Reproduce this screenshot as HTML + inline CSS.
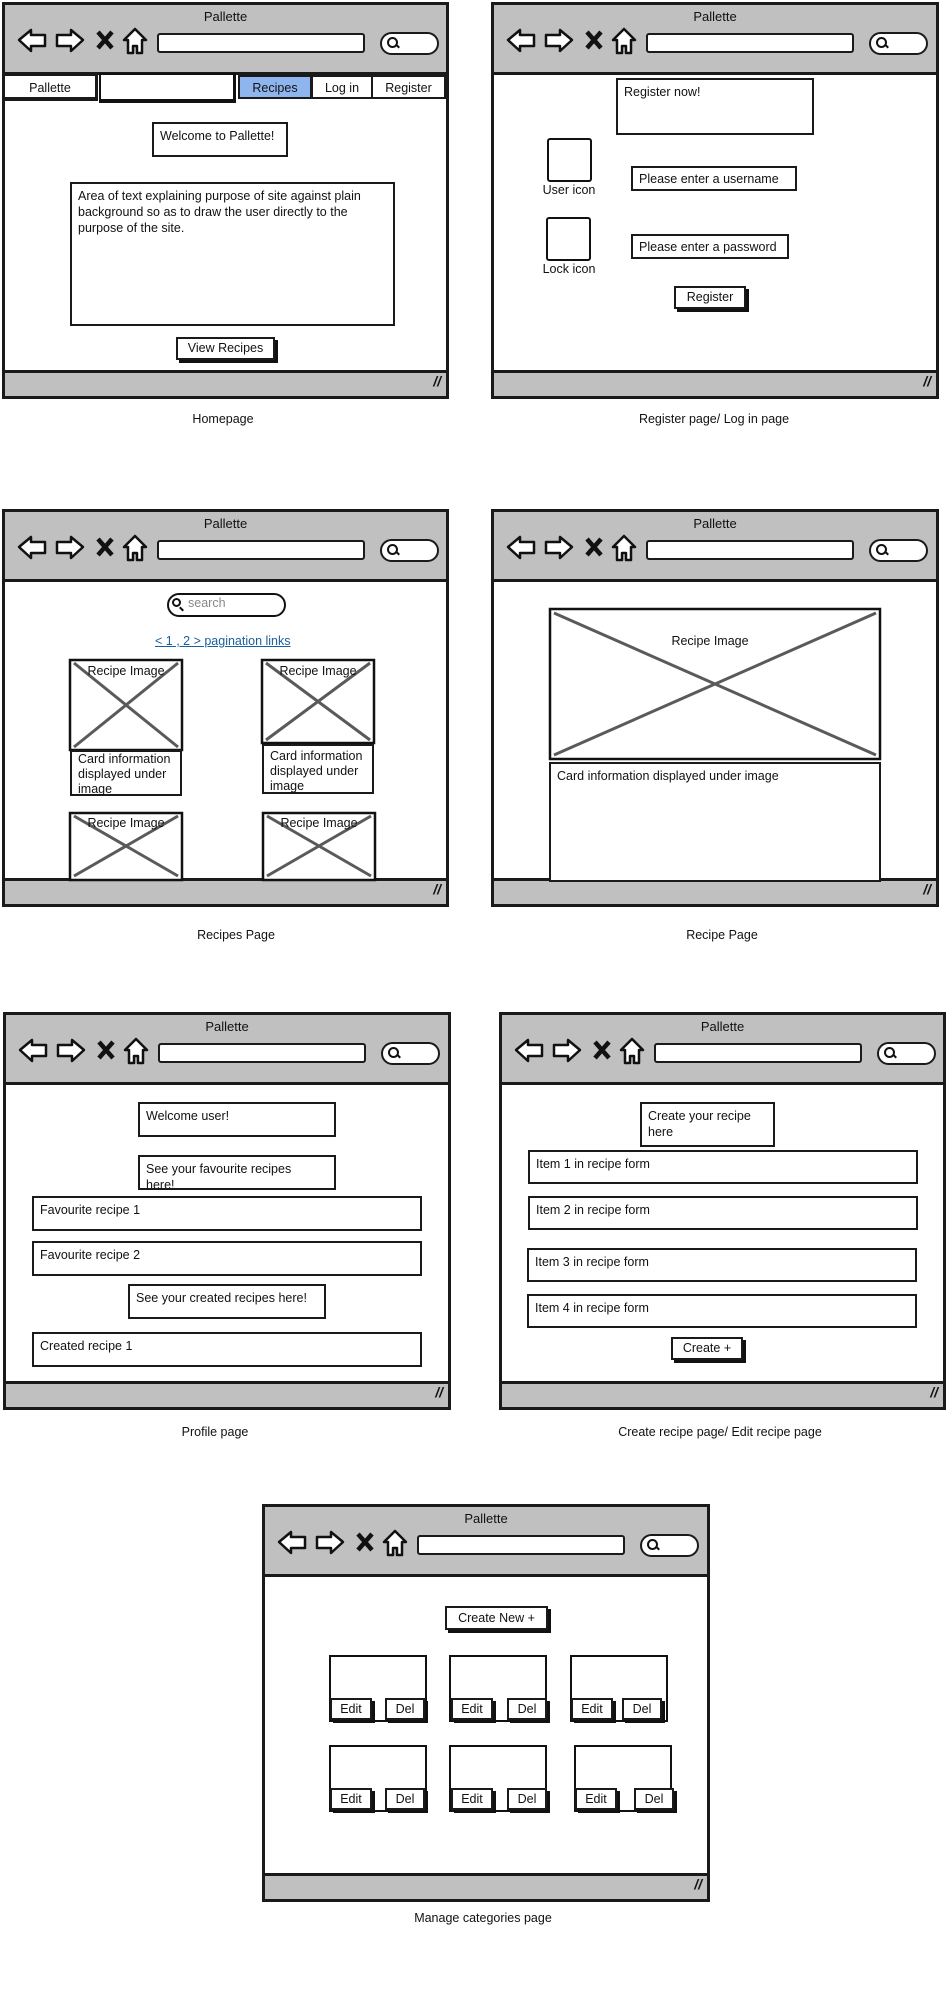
<!DOCTYPE html>
<html><head><meta charset="utf-8"><style>
body{margin:0;width:947px;height:1990px;position:relative;background:#fff;font-family:"Liberation Sans",sans-serif;color:#111;overflow:hidden}
.a{position:absolute;box-sizing:border-box}
.fr{border:3px solid #1a1a1a;background:#fff}
.tb{position:absolute;left:0;right:0;top:0;height:70px;background:#c0c0c0;border-bottom:3px solid #1a1a1a;box-sizing:border-box}
.tt{position:absolute;left:0;right:0;top:4px;text-align:center;font-size:13px}
.ico{position:absolute;left:11px;top:21px}
.addr{position:absolute;left:152px;top:28px;width:208px;height:20px;background:#fff;border:2px solid #1a1a1a;border-radius:3px;box-sizing:border-box}
.srch{position:absolute;left:375px;top:27px;width:59px;height:23px;background:#fff;border:2px solid #1a1a1a;border-radius:12px;box-sizing:border-box}
.srch:before{content:"";position:absolute;left:5px;top:3px;width:7px;height:7px;border:2px solid #111;border-radius:50%}
.srch:after{content:"";position:absolute;left:13px;top:11px;width:5px;height:2px;background:#111;transform:rotate(45deg)}
.ft{position:absolute;left:0;right:0;bottom:0;height:26px;background:#c0c0c0;border-top:3px solid #1a1a1a;box-sizing:border-box}
.ft:after{content:"//";position:absolute;right:5px;top:0;font-size:14px;font-weight:bold;font-style:italic}
.bx{border:2px solid #1a1a1a;background:#fff;font-size:12.5px;padding:4px 6px;line-height:16px}
.bt{border:2px solid #1a1a1a;background:#fff;font-size:12.5px;text-align:center;box-shadow:3px 3px 0 #111}
.cap{font-size:12.5px;text-align:center;width:300px}
</style></head><body>

<div class="a fr" style="left:2px;top:2px;width:447px;height:397px"><div class="tb"><div class="tt">Pallette</div>
<svg class="ico" width="132" height="30" viewBox="0 0 132 30"><g fill="#fff" stroke="#111" stroke-width="2.5" stroke-linejoin="round"><path d="M3 14 L15 4 L15 9 L29 9 L29 20 L15 20 L15 25 Z"/><path d="M67 14 L55 4 L55 9 L41 9 L41 20 L55 20 L55 25 Z"/><path d="M119 3 L130 14 L126 14 L126 27 L121 27 L121 20 L117 20 L117 27 L112 27 L112 14 L108 14 Z"/></g><path d="M82 6 L96 22 M96 6 L82 22" stroke="#111" stroke-width="4.5"/></svg>
<div class="addr"></div><div class="srch"></div></div><div class="ft"></div></div>

<div class="a fr" style="left:491px;top:2px;width:448px;height:397px"><div class="tb"><div class="tt">Pallette</div>
<svg class="ico" width="132" height="30" viewBox="0 0 132 30"><g fill="#fff" stroke="#111" stroke-width="2.5" stroke-linejoin="round"><path d="M3 14 L15 4 L15 9 L29 9 L29 20 L15 20 L15 25 Z"/><path d="M67 14 L55 4 L55 9 L41 9 L41 20 L55 20 L55 25 Z"/><path d="M119 3 L130 14 L126 14 L126 27 L121 27 L121 20 L117 20 L117 27 L112 27 L112 14 L108 14 Z"/></g><path d="M82 6 L96 22 M96 6 L82 22" stroke="#111" stroke-width="4.5"/></svg>
<div class="addr"></div><div class="srch"></div></div><div class="ft"></div></div>

<div class="a fr" style="left:2px;top:509px;width:447px;height:398px"><div class="tb"><div class="tt">Pallette</div>
<svg class="ico" width="132" height="30" viewBox="0 0 132 30"><g fill="#fff" stroke="#111" stroke-width="2.5" stroke-linejoin="round"><path d="M3 14 L15 4 L15 9 L29 9 L29 20 L15 20 L15 25 Z"/><path d="M67 14 L55 4 L55 9 L41 9 L41 20 L55 20 L55 25 Z"/><path d="M119 3 L130 14 L126 14 L126 27 L121 27 L121 20 L117 20 L117 27 L112 27 L112 14 L108 14 Z"/></g><path d="M82 6 L96 22 M96 6 L82 22" stroke="#111" stroke-width="4.5"/></svg>
<div class="addr"></div><div class="srch"></div></div><div class="ft"></div></div>

<div class="a fr" style="left:491px;top:509px;width:448px;height:398px"><div class="tb"><div class="tt">Pallette</div>
<svg class="ico" width="132" height="30" viewBox="0 0 132 30"><g fill="#fff" stroke="#111" stroke-width="2.5" stroke-linejoin="round"><path d="M3 14 L15 4 L15 9 L29 9 L29 20 L15 20 L15 25 Z"/><path d="M67 14 L55 4 L55 9 L41 9 L41 20 L55 20 L55 25 Z"/><path d="M119 3 L130 14 L126 14 L126 27 L121 27 L121 20 L117 20 L117 27 L112 27 L112 14 L108 14 Z"/></g><path d="M82 6 L96 22 M96 6 L82 22" stroke="#111" stroke-width="4.5"/></svg>
<div class="addr"></div><div class="srch"></div></div><div class="ft"></div></div>

<div class="a fr" style="left:3px;top:1012px;width:448px;height:398px"><div class="tb"><div class="tt">Pallette</div>
<svg class="ico" width="132" height="30" viewBox="0 0 132 30"><g fill="#fff" stroke="#111" stroke-width="2.5" stroke-linejoin="round"><path d="M3 14 L15 4 L15 9 L29 9 L29 20 L15 20 L15 25 Z"/><path d="M67 14 L55 4 L55 9 L41 9 L41 20 L55 20 L55 25 Z"/><path d="M119 3 L130 14 L126 14 L126 27 L121 27 L121 20 L117 20 L117 27 L112 27 L112 14 L108 14 Z"/></g><path d="M82 6 L96 22 M96 6 L82 22" stroke="#111" stroke-width="4.5"/></svg>
<div class="addr"></div><div class="srch"></div></div><div class="ft"></div></div>

<div class="a fr" style="left:499px;top:1012px;width:447px;height:398px"><div class="tb"><div class="tt">Pallette</div>
<svg class="ico" width="132" height="30" viewBox="0 0 132 30"><g fill="#fff" stroke="#111" stroke-width="2.5" stroke-linejoin="round"><path d="M3 14 L15 4 L15 9 L29 9 L29 20 L15 20 L15 25 Z"/><path d="M67 14 L55 4 L55 9 L41 9 L41 20 L55 20 L55 25 Z"/><path d="M119 3 L130 14 L126 14 L126 27 L121 27 L121 20 L117 20 L117 27 L112 27 L112 14 L108 14 Z"/></g><path d="M82 6 L96 22 M96 6 L82 22" stroke="#111" stroke-width="4.5"/></svg>
<div class="addr"></div><div class="srch"></div></div><div class="ft"></div></div>

<div class="a fr" style="left:262px;top:1504px;width:448px;height:398px"><div class="tb"><div class="tt">Pallette</div>
<svg class="ico" width="132" height="30" viewBox="0 0 132 30"><g fill="#fff" stroke="#111" stroke-width="2.5" stroke-linejoin="round"><path d="M3 14 L15 4 L15 9 L29 9 L29 20 L15 20 L15 25 Z"/><path d="M67 14 L55 4 L55 9 L41 9 L41 20 L55 20 L55 25 Z"/><path d="M119 3 L130 14 L126 14 L126 27 L121 27 L121 20 L117 20 L117 27 L112 27 L112 14 L108 14 Z"/></g><path d="M82 6 L96 22 M96 6 L82 22" stroke="#111" stroke-width="4.5"/></svg>
<div class="addr"></div><div class="srch"></div></div><div class="ft"></div></div>

<!-- F1 content -->
<div class="a bx" style="left:3px;top:74px;width:95px;height:27px;text-align:center;border-bottom-width:4px;border-right-width:3px">Pallette</div>
<div class="a" style="left:99px;top:73px;width:137px;height:30px;border:2px solid #111;border-bottom-width:4px;border-right-width:3px;background:#fff"></div>
<div class="a bx" style="left:238px;top:75px;width:74px;height:24px;background:#8fb5ee;text-align:center;padding:3px 0">Recipes</div>
<div class="a bx" style="left:311px;top:75px;width:62px;height:24px;text-align:center;padding:3px 0">Log in</div>
<div class="a bx" style="left:371px;top:75px;width:76px;height:24px;text-align:center;padding:3px 0;border-right-width:3px">Register</div>
<div class="a bx" style="left:152px;top:122px;width:136px;height:35px">Welcome to Pallette!</div>
<div class="a bx" style="left:70px;top:182px;width:325px;height:144px">Area of text explaining purpose of site against plain background so as to draw the user directly to the purpose of the site.</div>
<div class="a bt" style="left:176px;top:337px;width:99px;height:23px;line-height:19px">View Recipes</div>
<div class="a cap" style="left:73px;top:412px">Homepage</div>

<!-- F2 content -->
<div class="a bx" style="left:616px;top:78px;width:198px;height:57px">Register now!</div>
<div class="a" style="left:547px;top:138px;width:45px;height:44px;border:2px solid #111;border-radius:3px"></div>
<div class="a" style="left:519px;top:183px;width:100px;text-align:center;font-size:12.5px">User icon</div>
<div class="a" style="left:546px;top:217px;width:45px;height:44px;border:2px solid #111;border-radius:3px"></div>
<div class="a" style="left:519px;top:262px;width:100px;text-align:center;font-size:12.5px">Lock icon</div>
<div class="a bx" style="left:631px;top:166px;width:166px;height:25px;padding-top:3px">Please enter a username</div>
<div class="a bx" style="left:631px;top:234px;width:158px;height:25px;padding-top:3px">Please enter a password</div>
<div class="a bt" style="left:674px;top:286px;width:72px;height:23px;line-height:19px">Register</div>
<div class="a cap" style="left:564px;top:412px">Register page/ Log in page</div>

<!-- F3 content -->
<div class="a" style="left:167px;top:593px;width:119px;height:24px;border:2px solid #111;border-radius:12px;background:#fff"></div>
<div class="a" style="left:172px;top:598px;width:9px;height:9px;border:2px solid #111;border-radius:50%"></div>
<div class="a" style="left:179px;top:608px;width:5px;height:2px;background:#111;transform:rotate(45deg)"></div>
<div class="a" style="left:188px;top:596px;font-size:12.5px;color:#888">search</div>
<div class="a" style="left:155px;top:634px;font-size:12.5px;color:#1a5f9e;text-decoration:underline">&lt; 1 , 2 &gt; pagination links</div>
<svg class="a" style="left:0;top:0" width="947" height="1990">
<g fill="#fff" stroke="#111" stroke-width="2.5">
<rect x="70" y="660" width="112" height="90"/><rect x="262" y="660" width="112" height="83"/>
<rect x="70" y="813" width="112" height="67"/><rect x="263" y="813" width="112" height="67"/>
<rect x="550" y="609" width="330" height="150"/>
</g>
<g stroke="#5a5a5a" stroke-width="3">
<path d="M74 663 L178 747 M178 663 L74 747"/><path d="M266 663 L370 740 M370 663 L266 740"/>
<path d="M74 816 L178 876 M178 816 L74 876"/><path d="M267 816 L371 876 M371 816 L267 876"/>
<path d="M554 613 L876 755 M876 613 L554 755"/>
</g></svg>
<div class="a" style="left:70px;top:664px;width:112px;text-align:center;font-size:12.5px">Recipe Image</div>
<div class="a" style="left:262px;top:664px;width:112px;text-align:center;font-size:12.5px">Recipe Image</div>
<div class="a" style="left:70px;top:816px;width:112px;text-align:center;font-size:12.5px">Recipe Image</div>
<div class="a" style="left:263px;top:816px;width:112px;text-align:center;font-size:12.5px">Recipe Image</div>
<div class="a bx" style="left:70px;top:750px;width:112px;height:46px;padding:0 6px;line-height:15px">Card information displayed under image</div>
<div class="a bx" style="left:262px;top:744px;width:112px;height:50px;padding:3px 6px;line-height:15px">Card information displayed under image</div>
<div class="a cap" style="left:86px;top:928px">Recipes Page</div>

<!-- F4 -->
<div class="a" style="left:610px;top:634px;width:200px;text-align:center;font-size:12.5px">Recipe Image</div>
<div class="a bx" style="left:549px;top:762px;width:332px;height:120px">Card information displayed under image</div>
<div class="a cap" style="left:572px;top:928px">Recipe Page</div>

<!-- F5 -->
<div class="a bx" style="left:138px;top:1102px;width:198px;height:35px">Welcome user!</div>
<div class="a bx" style="left:138px;top:1155px;width:198px;height:35px;overflow:hidden;padding-right:30px">See your favourite recipes here!</div>
<div class="a bx" style="left:32px;top:1196px;width:390px;height:35px">Favourite recipe 1</div>
<div class="a bx" style="left:32px;top:1241px;width:390px;height:35px">Favourite recipe 2</div>
<div class="a bx" style="left:128px;top:1284px;width:198px;height:35px">See your created recipes here!</div>
<div class="a bx" style="left:32px;top:1332px;width:390px;height:35px">Created recipe 1</div>
<div class="a cap" style="left:65px;top:1425px">Profile page</div>

<!-- F6 -->
<div class="a bx" style="left:640px;top:1102px;width:135px;height:45px">Create your recipe here</div>
<div class="a bx" style="left:528px;top:1150px;width:390px;height:34px">Item 1 in recipe form</div>
<div class="a bx" style="left:528px;top:1196px;width:390px;height:34px">Item 2 in recipe form</div>
<div class="a bx" style="left:527px;top:1248px;width:390px;height:34px">Item 3 in recipe form</div>
<div class="a bx" style="left:527px;top:1294px;width:390px;height:34px">Item 4 in recipe form</div>
<div class="a bt" style="left:671px;top:1337px;width:72px;height:23px;line-height:19px">Create +</div>
<div class="a cap" style="left:570px;top:1425px">Create recipe page/ Edit recipe page</div>

<!-- F7 -->
<div class="a bt" style="left:445px;top:1606px;width:103px;height:24px;line-height:20px">Create New +</div>
<div class="a" style="left:329px;top:1655px;width:98px;height:67px;border:2px solid #111"></div>
<div class="a" style="left:449px;top:1655px;width:98px;height:67px;border:2px solid #111"></div>
<div class="a" style="left:570px;top:1655px;width:98px;height:67px;border:2px solid #111"></div>
<div class="a" style="left:329px;top:1745px;width:98px;height:67px;border:2px solid #111"></div>
<div class="a" style="left:449px;top:1745px;width:98px;height:67px;border:2px solid #111"></div>
<div class="a" style="left:574px;top:1745px;width:98px;height:67px;border:2px solid #111"></div>
<div class="a bt" style="left:330px;top:1698px;width:42px;height:22px;line-height:18px">Edit</div>
<div class="a bt" style="left:385px;top:1698px;width:40px;height:22px;line-height:18px">Del</div>
<div class="a bt" style="left:451px;top:1698px;width:42px;height:22px;line-height:18px">Edit</div>
<div class="a bt" style="left:507px;top:1698px;width:40px;height:22px;line-height:18px">Del</div>
<div class="a bt" style="left:571px;top:1698px;width:42px;height:22px;line-height:18px">Edit</div>
<div class="a bt" style="left:622px;top:1698px;width:40px;height:22px;line-height:18px">Del</div>
<div class="a bt" style="left:330px;top:1788px;width:42px;height:22px;line-height:18px">Edit</div>
<div class="a bt" style="left:385px;top:1788px;width:40px;height:22px;line-height:18px">Del</div>
<div class="a bt" style="left:451px;top:1788px;width:42px;height:22px;line-height:18px">Edit</div>
<div class="a bt" style="left:507px;top:1788px;width:40px;height:22px;line-height:18px">Del</div>
<div class="a bt" style="left:575px;top:1788px;width:42px;height:22px;line-height:18px">Edit</div>
<div class="a bt" style="left:634px;top:1788px;width:40px;height:22px;line-height:18px">Del</div>
<div class="a cap" style="left:333px;top:1911px">Manage categories page</div>
</body></html>
